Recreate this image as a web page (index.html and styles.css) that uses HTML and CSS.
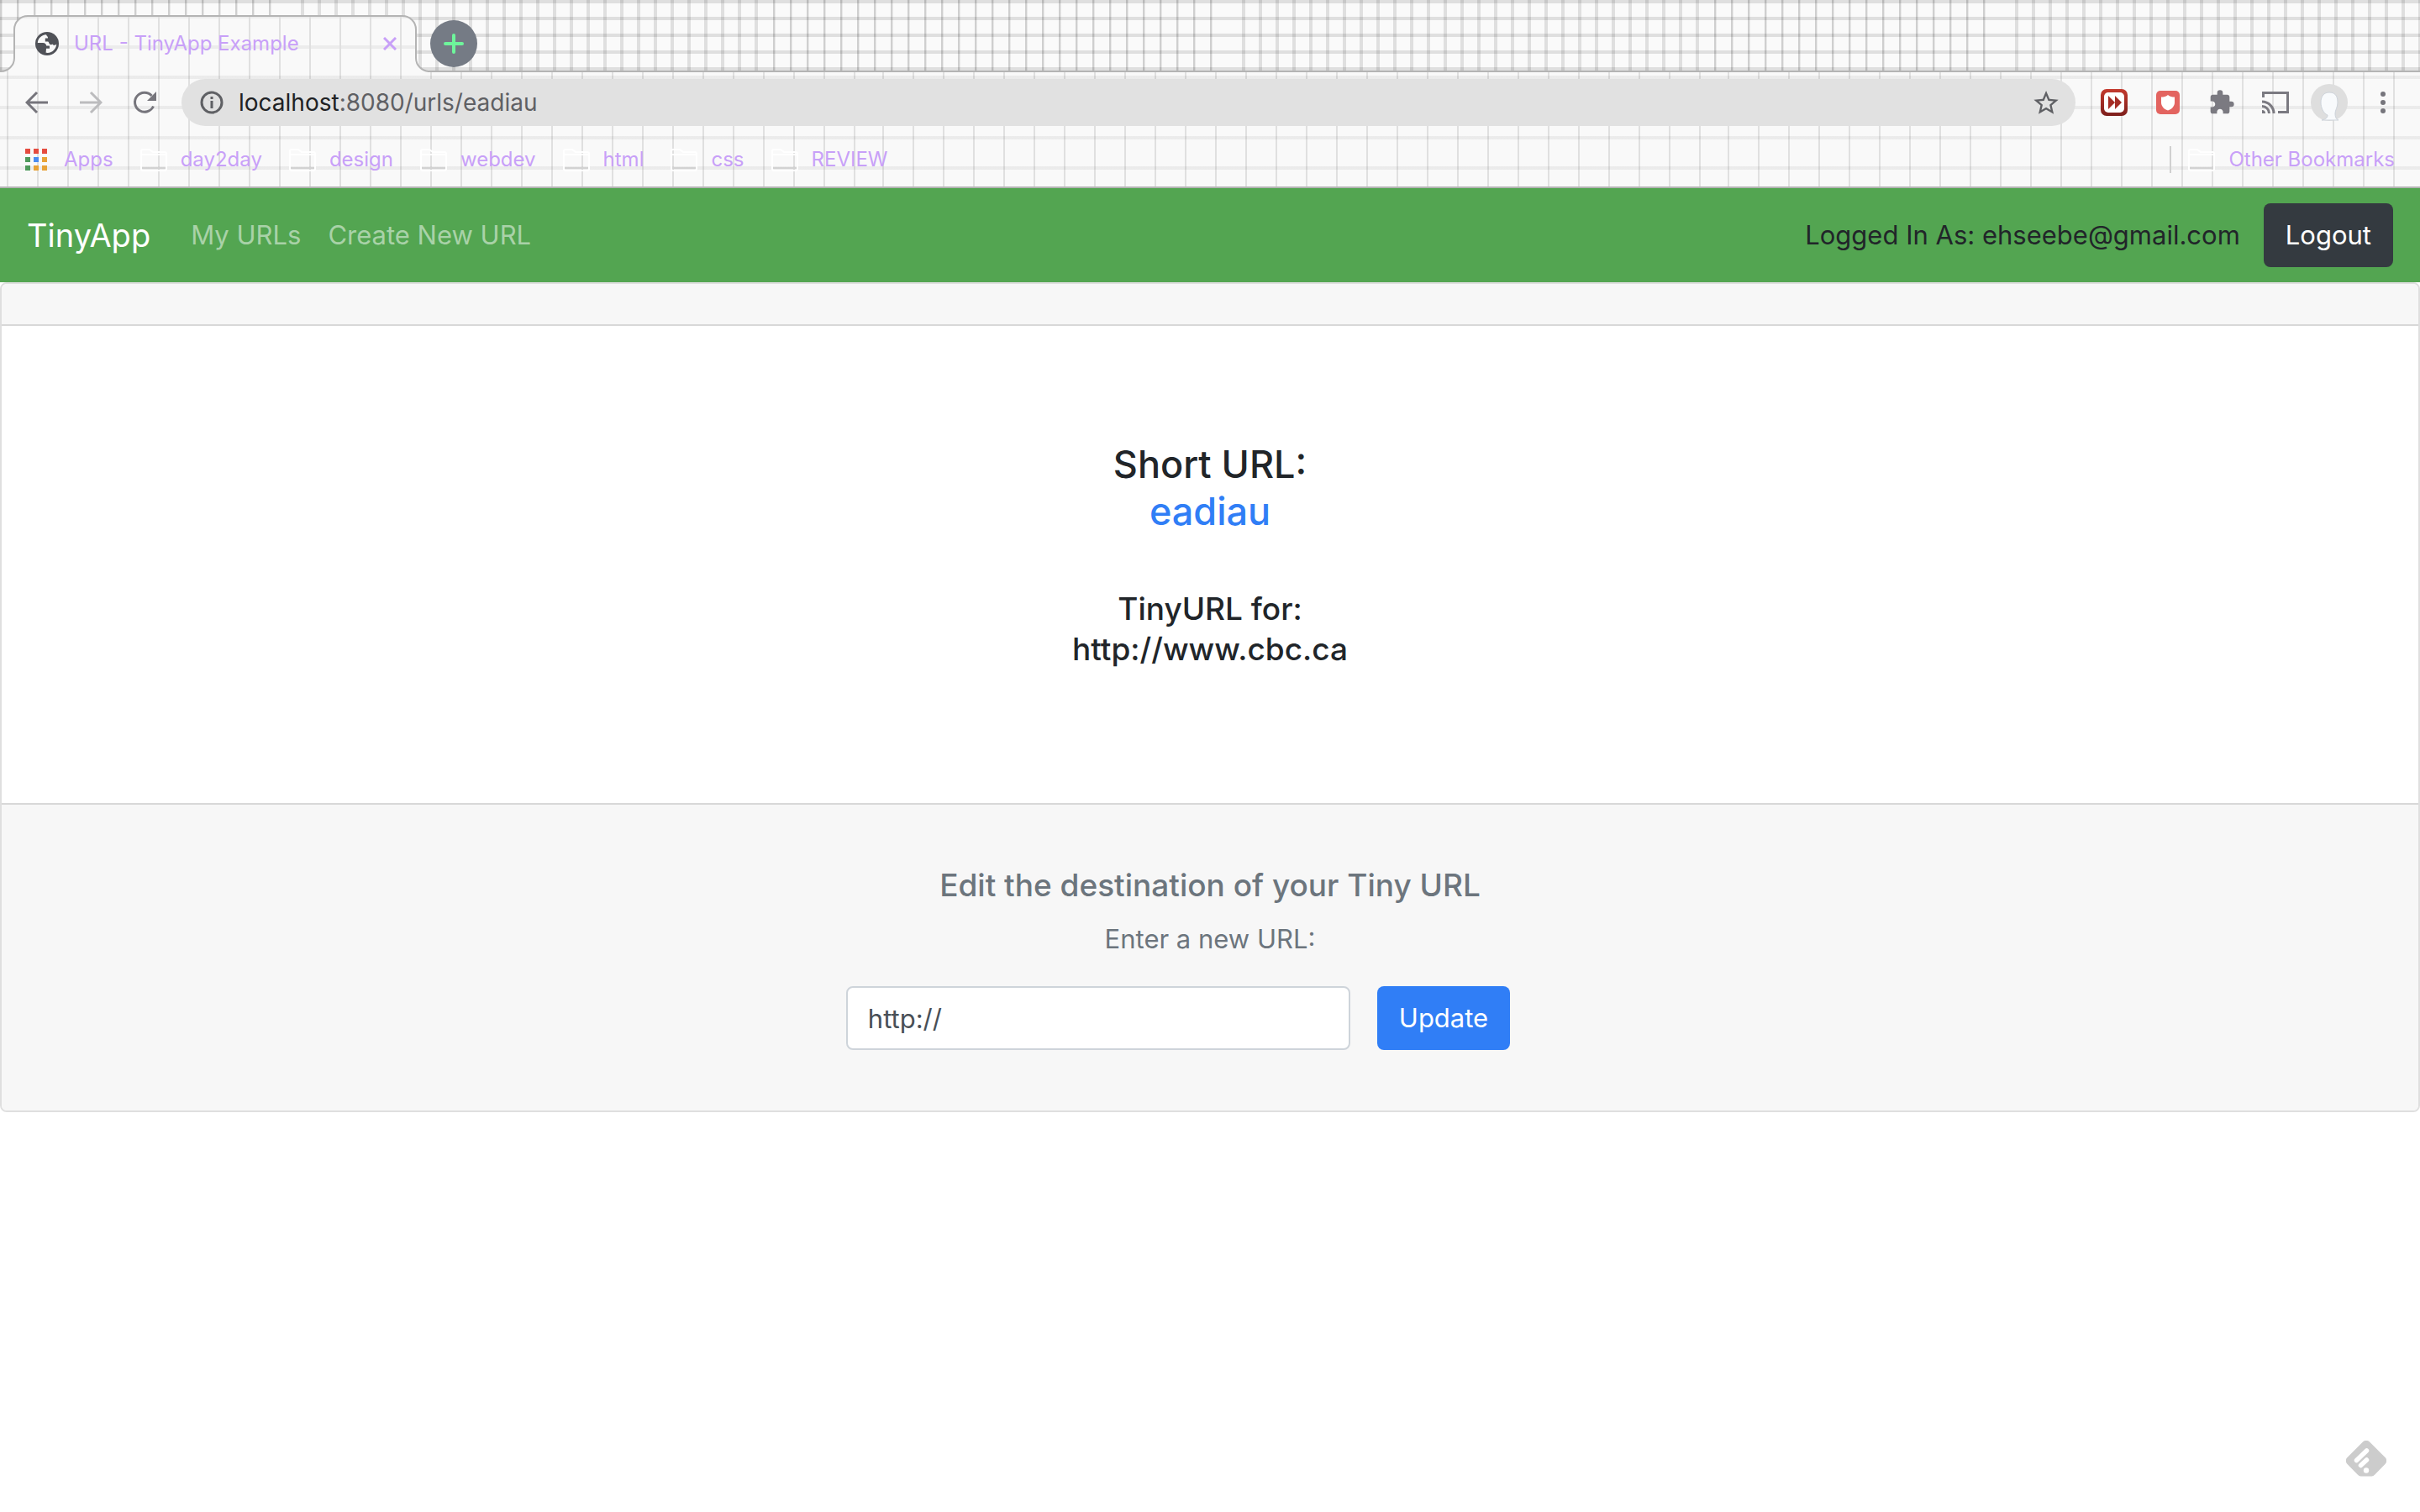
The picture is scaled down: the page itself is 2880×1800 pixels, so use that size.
FILE: index.html
```html
<!DOCTYPE html>
<html lang="en">
<head>
<meta charset="utf-8">
<title>URL - TinyApp Example</title>
<link rel="stylesheet" href="styles.css">
</head>
<body>
<svg class="defs" aria-hidden="true">
  <symbol id="folder" viewBox="0 0 32 28">
    <path d="M1 25V4a2 2 0 0 1 2-2h8l4 3h14a2 2 0 0 1 2 2v18a2 2 0 0 1-2 2H3a2 2 0 0 1-2-2zM1 8h30" fill="none" stroke="#fff" stroke-width="2"/>
    <path d="M2 24h28" stroke="#d2d2d2" stroke-width="2"/>
  </symbol>
</svg>

<header class="browser">
  <div class="tabstrip">
    <div class="tab">
      <svg class="tab-shape" viewBox="0 0 512 86" aria-hidden="true">
        <defs>
          <pattern id="tab-grid" x="8" y="18" width="36" height="36" patternUnits="userSpaceOnUse">
            <rect width="36" height="36" fill="#f9f9f9"/>
            <rect width="36" height="4" fill="#ececec"/>
            <rect width="2" height="36" fill="#e0e0e0"/>
          </pattern>
        </defs>
        <path d="M0 86V85H1A16 16 0 0 0 17 69V35A16 16 0 0 1 33 19H479A16 16 0 0 1 495 35V69A16 16 0 0 0 511 85V86z" fill="url(#tab-grid)"/>
        <path d="M0 85H1A16 16 0 0 0 17 69V35A16 16 0 0 1 33 19H479A16 16 0 0 1 495 35V69A16 16 0 0 0 511 85H512" fill="none" stroke="#b4b4b4" stroke-width="2"/>
      </svg>
      <svg class="icon" width="28" height="28" viewBox="0 0 28 28" aria-hidden="true">
        <circle cx="14" cy="14" r="14" fill="#505258"/>
        <path d="M13 3.2C7 3.600 3 8 2.800 13H9c3 0 4 2 4.200 3.600H17v3.200h-4l-.4 5C20 26 25 20 25.200 14.500c-1.500 1.800-4 1.500-4.800 0-1 1-2.400.8-3.400 0-1-1-.6-3-2.200-3h-3V7.400H15c.4-2-1.500-2.200-2-4.200z" fill="#f9f9f9"/>
      </svg>
      <span class="tab-title">URL - TinyApp Example</span>
      <button class="icon-button" aria-label="Close tab">
        <svg width="16" height="16" viewBox="0 0 16 16"><path d="M1 1l14 14M15 1L1 15" stroke="#c8a0f8" stroke-width="3"/></svg>
      </button>
    </div>
    <button class="new-tab" aria-label="New tab">
      <svg width="24" height="24" viewBox="0 0 24 24"><path d="M12 2v20M2 12h20" stroke="#6ef59b" stroke-width="4" stroke-linecap="round"/></svg>
    </button>
  </div>

  <div class="chrome">
    <div class="toolbar">
      <div class="nav-buttons">
        <button class="icon-button" aria-label="Back">
          <svg width="28" height="28" viewBox="0 0 28 28"><path d="M27 14H3M14 2L2 14l12 12" fill="none" stroke="#76757c" stroke-width="3"/></svg>
        </button>
        <button class="icon-button" aria-label="Forward">
          <svg width="28" height="28" viewBox="0 0 28 28"><path d="M1 14h24M14 2l12 12-12 12" fill="none" stroke="#bcbcbe" stroke-width="3"/></svg>
        </button>
        <button class="icon-button" aria-label="Reload">
          <svg width="28" height="28" viewBox="0 0 28 28"><path d="M24.500 18.500A11.500 11.500 0 1 1 22.500 6" fill="none" stroke="#76757c" stroke-width="3"/><path d="M28 1v11H17z" fill="#76757c"/></svg>
        </button>
      </div>
      <div class="omnibox">
        <svg class="icon" width="28" height="28" viewBox="0 0 28 28" aria-hidden="true"><circle cx="14" cy="14" r="12" fill="none" stroke="#5f6064" stroke-width="3"/><path d="M14 12v9M14 7v3" stroke="#5f6064" stroke-width="3"/></svg>
        <span class="address"><span class="host">localhost</span>:8080/urls/eadiau</span>
        <button class="icon-button" aria-label="Bookmark this page">
          <svg width="30" height="30" viewBox="0 0 24 24"><path d="M22 9.240l-7.190-.62L12 2 9.190 8.630 2 9.240l5.460 4.730L5.820 21 12 17.270 18.180 21l-1.630-7.030L22 9.240zM12 15.400l-3.760 2.270 1-4.280-3.320-2.880 4.380-.38L12 6.100l1.710 4.040 4.380.38-3.320 2.880 1 4.280L12 15.400z" transform="translate(-2 -1.500) scale(1.170)" fill="#5f6064"/></svg>
        </button>
      </div>
      <div class="extensions">
        <button class="icon-button" aria-label="Video speed">
          <svg width="32" height="32" viewBox="0 0 32 32"><defs><linearGradient id="red" x2="0" y2="1"><stop stop-color="#c43a2e"/><stop offset="1" stop-color="#7d1f1c"/></linearGradient></defs><rect width="32" height="32" rx="7" fill="url(#red)"/><rect x="4" y="4" width="24" height="24" rx="5" fill="#fff"/><path d="M9 8l8 8-8 8zM17 8l8 8-8 8z" fill="#a52c25"/></svg>
        </button>
        <button class="icon-button" aria-label="Content blocker">
          <svg width="32" height="28" viewBox="0 0 32 28"><rect x="2" width="28" height="28" rx="5" fill="#e36460"/><path d="M16 5c2 2 5 2.500 8 2.500V14c0 4-3 8-8 9.500C11 22 8 18 8 14V7.500c3 0 6-.5 8-2.500z" fill="#fff"/></svg>
        </button>
        <button class="icon-button" aria-label="Extensions">
          <svg width="32" height="32" viewBox="0 0 24 24"><path d="M20.500 11H19V7c0-1.100-.9-2-2-2h-4V3.500a2.500 2.500 0 0 0-5 0V5H4c-1.100 0-1.990.9-1.990 2v3.800H3.500c1.490 0 2.700 1.210 2.700 2.700s-1.210 2.700-2.700 2.700H2V20c0 1.100.9 2 2 2h3.800v-1.500c0-1.490 1.210-2.700 2.700-2.700s2.700 1.210 2.700 2.700V22H17c1.100 0 2-.9 2-2v-4h1.500a2.500 2.500 0 0 0 0-5z" fill="#7b7a81"/></svg>
        </button>
        <button class="icon-button" aria-label="Cast">
          <svg width="32" height="26" viewBox="0 0 32 26"><path d="M1.500 7V1.500h29v23H19" fill="none" stroke="#7b7a81" stroke-width="3"/><path d="M0 12a14 14 0 0 1 14 14M0 17.500A8.500 8.500 0 0 1 8.500 26" fill="none" stroke="#7b7a81" stroke-width="3"/><path d="M0 22a4 4 0 0 1 4 4H0z" fill="#7b7a81"/></svg>
        </button>
        <button class="icon-button" aria-label="Profile">
          <svg width="44" height="44" viewBox="0 0 44 44"><circle cx="22" cy="22" r="22" fill="#dedede"/><path d="M13 43c5-1 7-3 7-6-5-2-8-9-8-15 0-8 4-12 10-12s10 3 10 12c0 6-3 9-3 13s1 7 4 8z" fill="#f8fafc" stroke="#cdd3da"/></svg>
        </button>
        <button class="icon-button" aria-label="Menu">
          <svg width="32" height="28" viewBox="0 0 32 28"><g fill="#76757c"><circle cx="16" cy="4" r="3"/><circle cx="16" cy="14" r="3"/><circle cx="16" cy="24" r="3"/></g></svg>
        </button>
      </div>
    </div>

    <nav class="bookmarks" aria-label="Bookmarks">
      <a class="apps" href="#apps">
        <svg width="26" height="26" viewBox="0 0 26 26" aria-hidden="true"><path d="M0 0h6v6H0zM10 0h6v6h-6zM20 0h6v6h-6z" fill="#e54b3f"/><path d="M0 10h6v6H0zM0 20h6v6H0z" fill="#4f9a5c"/><path d="M10 10h6v6h-6z" fill="#4a8cf0"/><path d="M20 10h6v6h-6zM10 20h6v6h-6zM20 20h6v6h-6z" fill="#e8a337"/></svg>
        Apps
      </a>
      <a href="#day2day"><svg class="folder" aria-hidden="true"><use href="#folder"/></svg>day2day</a>
      <a href="#design"><svg class="folder" aria-hidden="true"><use href="#folder"/></svg>design</a>
      <a href="#webdev"><svg class="folder" aria-hidden="true"><use href="#folder"/></svg>webdev</a>
      <a href="#html"><svg class="folder" aria-hidden="true"><use href="#folder"/></svg>html</a>
      <a href="#css"><svg class="folder" aria-hidden="true"><use href="#folder"/></svg>css</a>
      <a href="#review"><svg class="folder" aria-hidden="true"><use href="#folder"/></svg>REVIEW</a>
      <a class="other" href="#other"><svg class="folder" aria-hidden="true"><use href="#folder"/></svg>Other Bookmarks</a>
    </nav>
  </div>
</header>

<nav class="navbar" aria-label="TinyApp">
  <a class="brand" href="#home">TinyApp</a>
  <a class="nav-link" href="#urls">My URLs</a>
  <a class="nav-link" href="#new">Create New URL</a>
  <div class="account">
    <span>Logged In As: ehseebe@gmail.com</span>
    <button class="btn btn-dark">Logout</button>
  </div>
</nav>

<main class="card">
  <div class="card-header"></div>
  <section class="card-body">
    <h1 class="short-url">Short URL:<br><a href="#eadiau">eadiau</a></h1>
    <h2 class="long-url">TinyURL for:<br>http://www.cbc.ca</h2>
  </section>
  <form class="card-footer">
    <h2 class="edit-title">Edit the destination of your Tiny URL</h2>
    <label class="edit-label" for="new-url">Enter a new URL:</label>
    <div class="edit-row">
      <input class="edit-input" id="new-url" type="text" value="http://">
      <button class="btn btn-primary" type="button">Update</button>
    </div>
  </form>
</main>

<button class="feedly" aria-label="Follow in Feedly">
  <svg width="48" height="43" viewBox="0 0 48 43"><path d="M20 1.600a5.500 5.500 0 0 1 8 0L46.500 20a5.500 5.500 0 0 1 0 8L34 40.800A5.500 5.500 0 0 1 30.500 42.500h-13a5.500 5.500 0 0 1-3.500-1.700L1.500 28a5.500 5.500 0 0 1 0-8z" fill="#ccc"/><path d="M12.500 23.500L24.500 12M17.500 29.500l7-6.500" stroke="#fff" stroke-width="5.500" stroke-linecap="round"/><circle cx="24" cy="35.500" r="3.200" fill="#fff"/></svg>
</button>
</body>
</html>
```
FILE: styles.css
```css
* {
  box-sizing: border-box;
}

body {
  margin: 0;
  background: #fff;
  color: #212529;
  font: 31px/48px Inter, "Liberation Sans", sans-serif;
}

a {
  color: inherit;
  text-decoration: none;
}

button,
input {
  font: inherit;
  border: 0;
}

h1,
h2 {
  margin: 0;
  font-weight: 500;
}

svg {
  display: block;
  flex: none;
}

.defs {
  position: absolute;
  width: 0;
  height: 0;
}

/* Browser window */

.tabstrip {
  display: flex;
  align-items: center;
  gap: 16px;
  height: 86px;
  padding: 20px 0 0;
  border-bottom: 2px solid #b4b4b4;
  background:
    repeating-linear-gradient(#0000001c 0 4px, #0000 4px 20px),
    repeating-linear-gradient(90deg, #0000002c 0 2px, #0001 2px 3px, #0000 3px 20px) 0 0 / 340px 100% no-repeat,
    repeating-linear-gradient(90deg, #0000002c 0 2px, #0001 2px 3px, #0000 3px 20px) 920px 0 / 540px 100% no-repeat,
    repeating-linear-gradient(90deg, #0000002c 0 2px, #0001 2px 3px, #0000 3px 20px) 2040px 0 / 340px 100% no-repeat,
    repeating-linear-gradient(90deg, #0000001c 0 4px, #0000 4px 20px) 358px 0 / 560px 100% no-repeat,
    repeating-linear-gradient(90deg, #0000001c 0 4px, #0000 4px 20px) 1478px 0 / 560px 100% no-repeat,
    repeating-linear-gradient(90deg, #0000001c 0 4px, #0000 4px 20px) 2398px 0 / 100% 100% no-repeat,
    #fafafa;
}

.tab {
  position: relative;
  display: flex;
  align-items: center;
  gap: 18px;
  width: 496px;
  height: 64px;
  padding: 0 24px 0 42px;
}

.tab-shape {
  position: absolute;
  left: 0;
  bottom: -2px;
  width: 512px;
  height: 86px;
}

.icon,
.tab-title,
.tab .icon-button {
  position: relative;
}

.tab-title {
  flex: 1;
  color: #c8a0f8;
  font-size: 24px;
}

.icon-button {
  padding: 0;
  background: none;
}

.new-tab {
  display: grid;
  place-items: center;
  width: 56px;
  height: 56px;
  padding: 0;
  border-radius: 50%;
  background: #757b85;
}

.chrome {
  border-bottom: 2px solid #b4b4b4;
  background:
    repeating-linear-gradient(#0000 0 4px, #0000000e 4px 8px, #0000 8px 36px),
    repeating-linear-gradient(90deg, #0000 0 8px, #0000001a 8px 10px, #0000 10px 36px) 0 0 / 1044px 100% no-repeat,
    repeating-linear-gradient(90deg, #0000 0 6px, #0000001a 6px 8px, #0000 8px 36px) 1044px 0 / 1008px 100% no-repeat,
    repeating-linear-gradient(90deg, #0000 0 4px, #0000001a 4px 6px, #0000 6px 36px) 2052px 0 / 100% 100% no-repeat,
    #f9f9f9;
}

.toolbar {
  display: flex;
  align-items: center;
  gap: 30px;
  padding: 8px 28px 0 30px;
}

.nav-buttons {
  display: flex;
  gap: 36px;
}

.omnibox {
  display: flex;
  flex: 1;
  align-items: center;
  gap: 18px;
  height: 56px;
  padding: 0 20px 0 22px;
  border-radius: 28px;
  background: #e1e1e1;
}

.address {
  flex: 1;
  color: #5f6064;
  font-size: 28px;
}

.host {
  color: #202124;
}

.extensions {
  display: flex;
  align-items: center;
  gap: 32px;
}

.extensions .icon-button:nth-child(5) {
  margin: 0 -6px;
}

.bookmarks {
  display: flex;
  align-items: center;
  gap: 32px;
  height: 72px;
  padding: 8px 30px 0;
  color: #c8a0f8;
  font-size: 24px;
}

.bookmarks a {
  display: flex;
  align-items: center;
  gap: 16px;
}

.bookmarks .apps {
  gap: 20px;
}

.bookmarks .other {
  height: 32px;
  margin-left: auto;
  padding-left: 20px;
  border-left: 2px solid #d0d0d0;
}

.folder {
  width: 32px;
  height: 28px;
}

/* Application */

.navbar {
  display: flex;
  align-items: center;
  gap: 32px;
  padding: 18px 32px;
  background: #53a551;
}

.brand {
  margin-right: 16px;
  color: #fff;
  font-size: 38px;
}

.nav-link {
  color: #a9d2a8;
}

.account {
  display: flex;
  align-items: center;
  gap: 28px;
  margin-left: auto;
}

.btn {
  height: 76px;
  padding: 0 26px;
  border-radius: 8px;
  color: #fff;
}

.btn-dark {
  background: #343a40;
}

.btn-primary {
  background: #307ef6;
}

.card {
  border: 2px solid #dfdfdf;
  border-radius: 8px;
  text-align: center;
}

.card-header {
  height: 50px;
  border-bottom: 2px solid #d8d8d8;
  border-radius: 6px 6px 0 0;
  background: #f7f7f7;
}

.card-body {
  display: grid;
  gap: 64px;
  padding: 137px 40px 159px;
}

.short-url {
  font-size: 45px;
  line-height: 56px;
}

.short-url a {
  color: #307ef6;
}

.long-url,
.edit-title {
  font-size: 37px;
}

.card-footer {
  padding: 72px 40px;
  border-top: 2px solid #d8d8d8;
  border-radius: 0 0 6px 6px;
  background: #f7f7f7;
  color: #6c757d;
}

.edit-label {
  display: block;
  margin: 16px 0 32px;
}

.edit-row {
  display: flex;
  justify-content: center;
  gap: 32px;
  padding-right: 76px;
}

.edit-input {
  width: 600px;
  height: 76px;
  padding: 0 24px;
  border: 2px solid #ced4da;
  border-radius: 8px;
  background: #fff;
  color: #495057;
}

.feedly {
  position: fixed;
  right: 40px;
  bottom: 42px;
  padding: 0;
  background: none;
}
```
